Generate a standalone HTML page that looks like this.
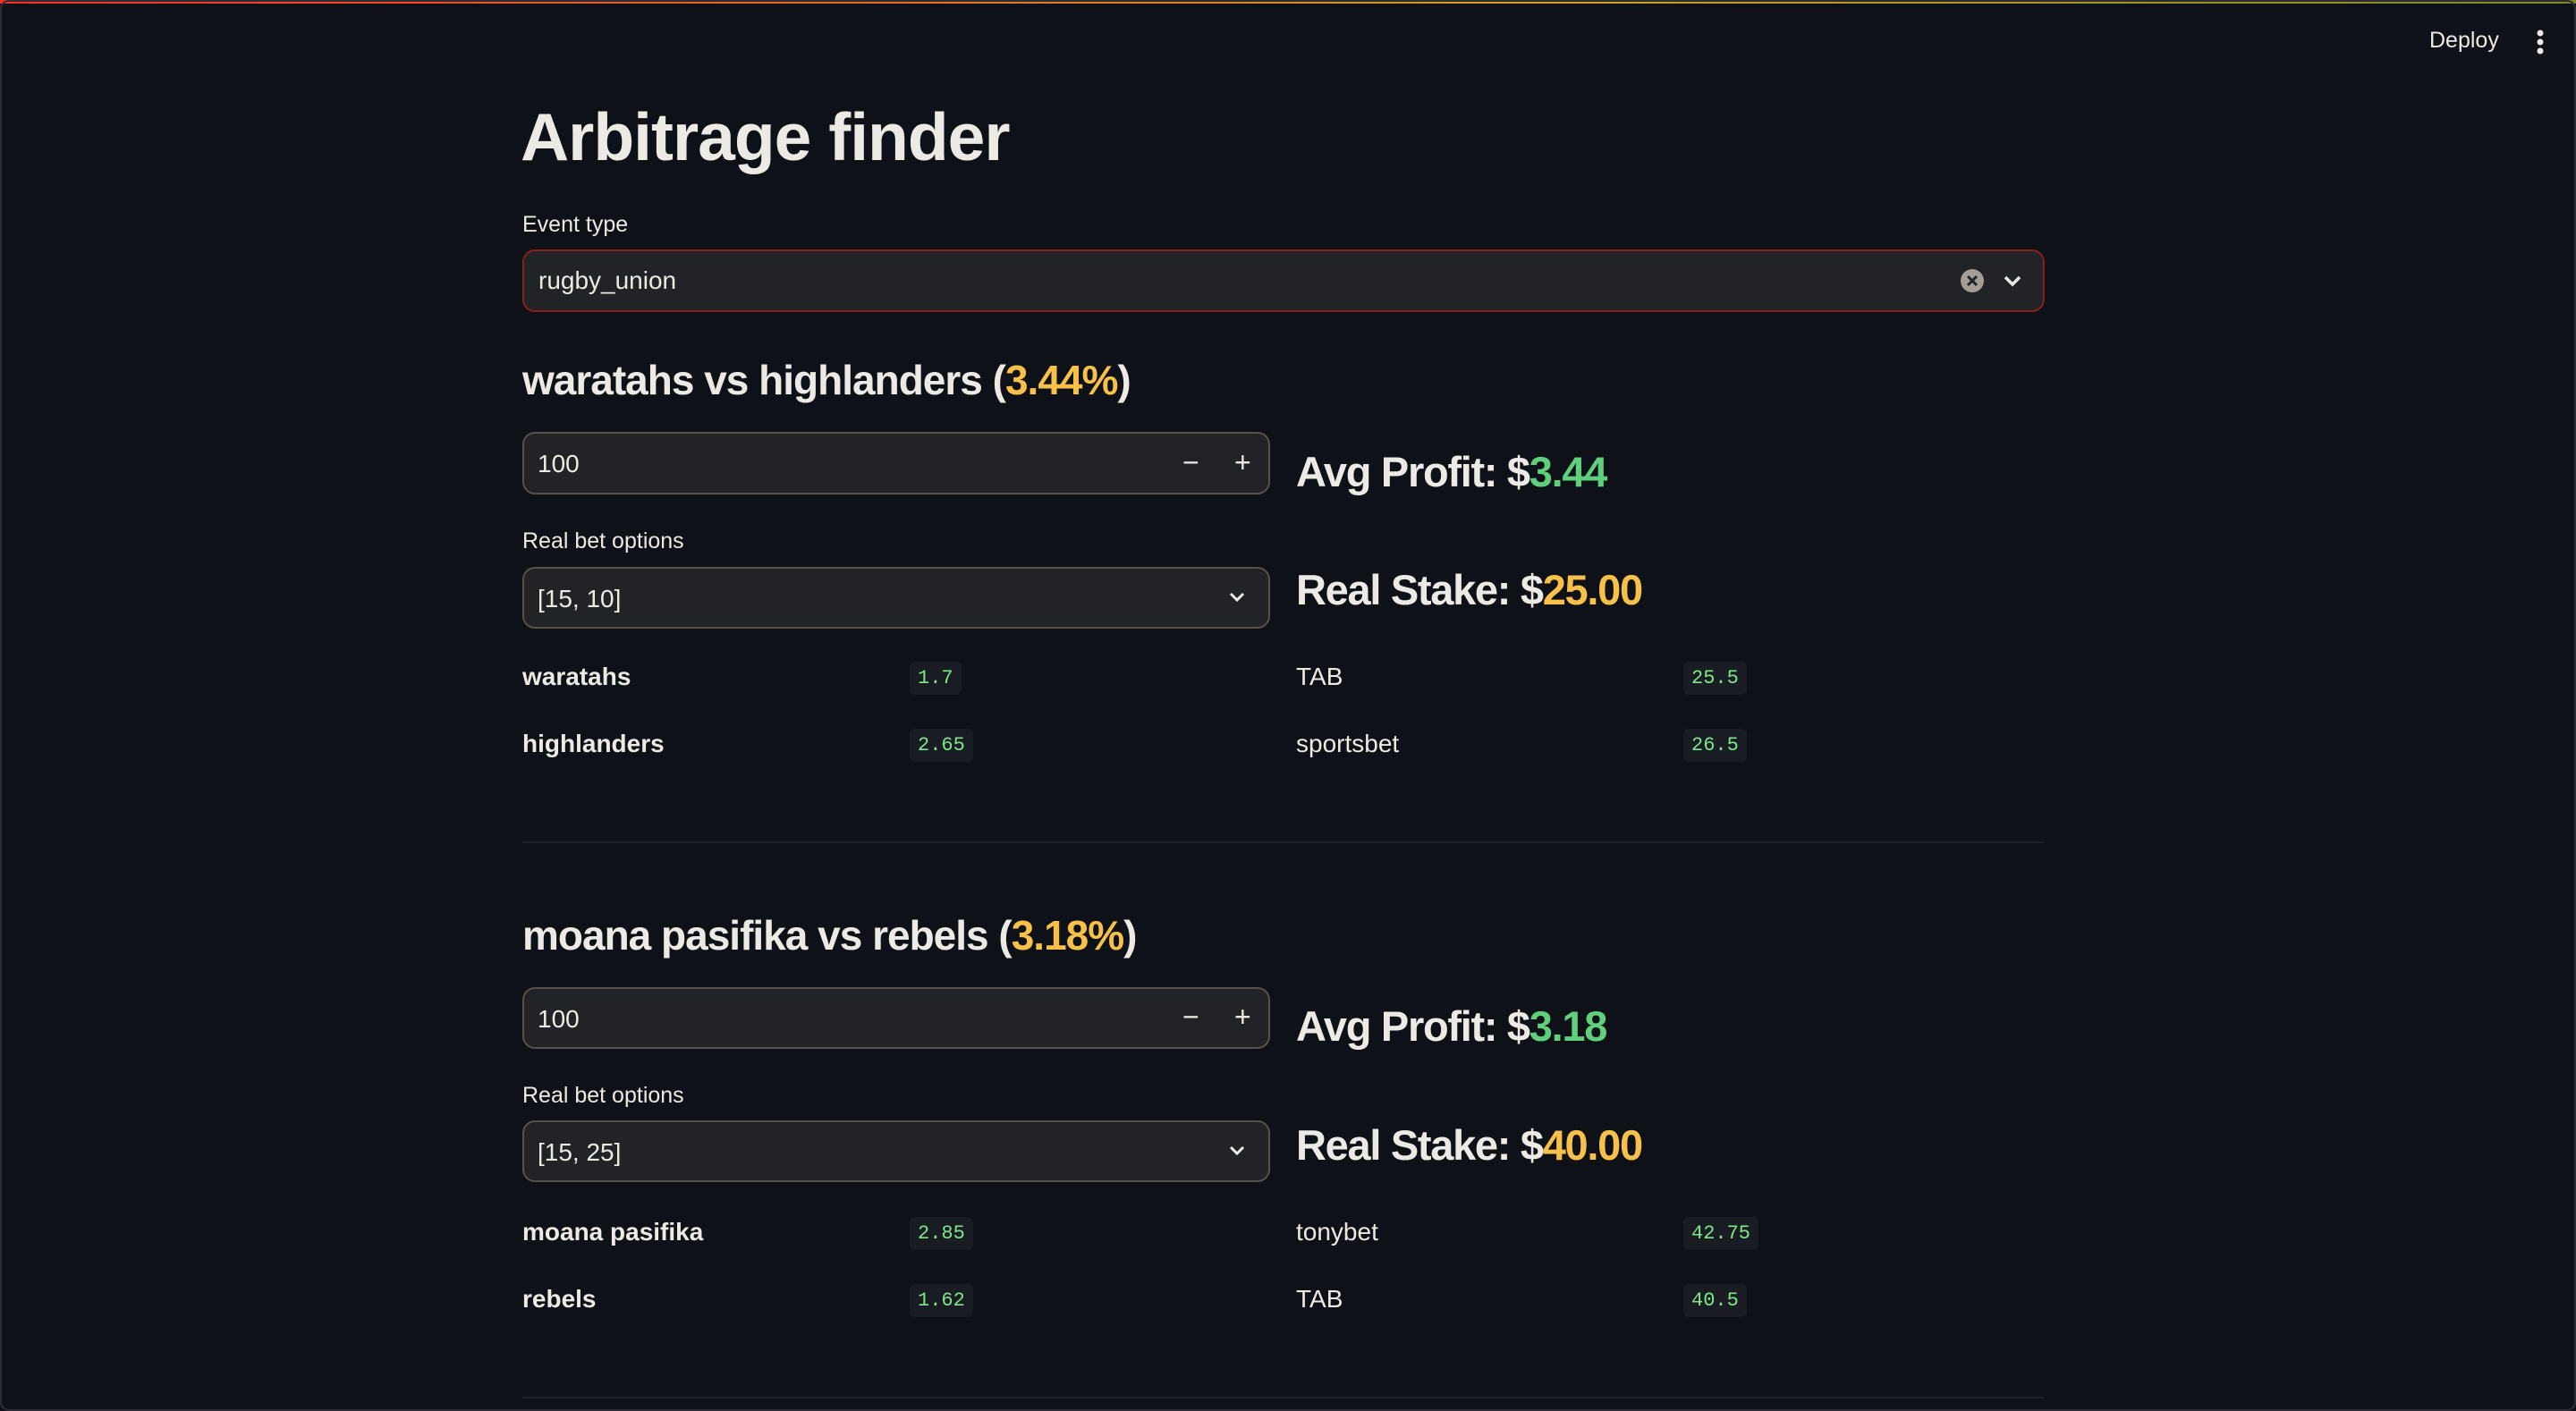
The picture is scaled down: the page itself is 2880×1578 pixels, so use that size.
<!DOCTYPE html>
<html><head><meta charset="utf-8"><style>
*{margin:0;padding:0;box-sizing:border-box}
body{width:2880px;height:1578px;background:#0e1117;color:#eceae5;font-family:"Liberation Sans",sans-serif;position:relative;overflow:hidden}
.frame{position:absolute;inset:0;border:2px solid #2b2d33;border-radius:10px;pointer-events:none}
.topbar{position:absolute;left:0;top:0;width:2880px;height:4px;background:linear-gradient(90deg,#ff2b2b,#d4a017 60%,#7d8a2a)}
.a{position:absolute;white-space:nowrap}
.lbl{font-size:25px}
.box{position:absolute;border-radius:14px;background:#222326}
.h2{font-size:46px;font-weight:bold;letter-spacing:-1px}
.big{font-size:47px;font-weight:bold;letter-spacing:-1.3px}
.y{color:#f6c049}.g{color:#5fcf7b}
.row{font-size:28px}
.code{position:absolute;background:#1a1c23;color:#7ee787;font-family:"Liberation Mono",monospace;font-size:22px;border-radius:6px;padding:6px 9px}
.inval{font-size:28px}
.div{position:absolute;left:584px;width:1701px;height:2px;background:#1d2027}
</style></head><body>
<div class="topbar"></div>
<div class="a" style="left:2716px;top:31px;font-size:25px">Deploy</div>
<svg class="a" style="left:2832px;top:32px" width="16" height="32"><circle cx="8" cy="5" r="3.5" fill="#eceae5"/><circle cx="8" cy="15" r="3.5" fill="#eceae5"/><circle cx="8" cy="25" r="3.5" fill="#eceae5"/></svg>

<div class="a" style="left:582px;top:110px;font-size:75px;font-weight:bold;letter-spacing:-1px">Arbitrage finder</div>
<div class="a lbl" style="left:584px;top:237px">Event type</div>
<div class="box" style="left:584px;top:279px;width:1702px;height:70px;border:2px solid #8a1f1a"></div>
<div class="a inval" style="left:602px;top:298px">rugby_union</div>
<svg class="a" style="left:2191px;top:300px" width="28" height="28"><circle cx="14" cy="14" r="13" fill="#a39e96"/><path d="M9 9L19 19M19 9L9 19" stroke="#222326" stroke-width="3"/></svg>
<svg class="a" style="left:2238px;top:304px" width="24" height="20"><path d="M4 6L12 14L20 6" stroke="#eceae5" stroke-width="3.5" fill="none"/></svg>

<!-- section 1 -->
<div class="a h2" style="left:584px;top:398px">waratahs vs highlanders (<span class="y">3.44%</span>)</div>
<div class="box" style="left:584px;top:483px;width:836px;height:70px;border:2px solid #55524c"></div>
<div class="a inval" style="left:601px;top:503px">100</div>
<div class="a" style="left:1322px;top:499px;font-size:32px">−</div>
<div class="a" style="left:1380px;top:499px;font-size:32px">+</div>
<div class="a big" style="left:1449px;top:500px">Avg Profit: $<span class="g">3.44</span></div>
<div class="a lbl" style="left:584px;top:591px">Real bet options</div>
<div class="box" style="left:584px;top:634px;width:836px;height:69px;border:2px solid #55524c"></div>
<div class="a inval" style="left:601px;top:654px">[15, 10]</div>
<svg class="a" style="left:1372px;top:659px" width="22" height="18"><path d="M4 5L11 12L18 5" stroke="#eceae5" stroke-width="3" fill="none"/></svg>
<div class="a big" style="left:1449px;top:632px">Real Stake: $<span class="y">25.00</span></div>
<div class="a row" style="left:584px;top:741px;font-weight:bold">waratahs</div>
<div class="code" style="left:1017px;top:740px">1.7</div>
<div class="a row" style="left:1449px;top:741px">TAB</div>
<div class="code" style="left:1882px;top:740px">25.5</div>
<div class="a row" style="left:584px;top:816px;font-weight:bold">highlanders</div>
<div class="code" style="left:1017px;top:815px">2.65</div>
<div class="a row" style="left:1449px;top:816px">sportsbet</div>
<div class="code" style="left:1882px;top:815px">26.5</div>
<div class="div" style="top:941px"></div>

<!-- section 2 -->
<div class="a h2" style="left:584px;top:1019px">moana pasifika vs rebels (<span class="y">3.18%</span>)</div>
<div class="box" style="left:584px;top:1104px;width:836px;height:69px;border:2px solid #55524c"></div>
<div class="a inval" style="left:601px;top:1124px">100</div>
<div class="a" style="left:1322px;top:1119px;font-size:32px">−</div>
<div class="a" style="left:1380px;top:1119px;font-size:32px">+</div>
<div class="a big" style="left:1449px;top:1120px">Avg Profit: $<span class="g">3.18</span></div>
<div class="a lbl" style="left:584px;top:1211px">Real bet options</div>
<div class="box" style="left:584px;top:1253px;width:836px;height:69px;border:2px solid #55524c"></div>
<div class="a inval" style="left:601px;top:1273px">[15, 25]</div>
<svg class="a" style="left:1372px;top:1278px" width="22" height="18"><path d="M4 5L11 12L18 5" stroke="#eceae5" stroke-width="3" fill="none"/></svg>
<div class="a big" style="left:1449px;top:1253px">Real Stake: $<span class="y">40.00</span></div>
<div class="a row" style="left:584px;top:1362px;font-weight:bold">moana pasifika</div>
<div class="code" style="left:1017px;top:1361px">2.85</div>
<div class="a row" style="left:1449px;top:1362px">tonybet</div>
<div class="code" style="left:1882px;top:1361px">42.75</div>
<div class="a row" style="left:584px;top:1437px;font-weight:bold">rebels</div>
<div class="code" style="left:1017px;top:1436px">1.62</div>
<div class="a row" style="left:1449px;top:1437px">TAB</div>
<div class="code" style="left:1882px;top:1436px">40.5</div>
<div class="div" style="top:1562px"></div>
<div class="frame"></div>
</body></html>
